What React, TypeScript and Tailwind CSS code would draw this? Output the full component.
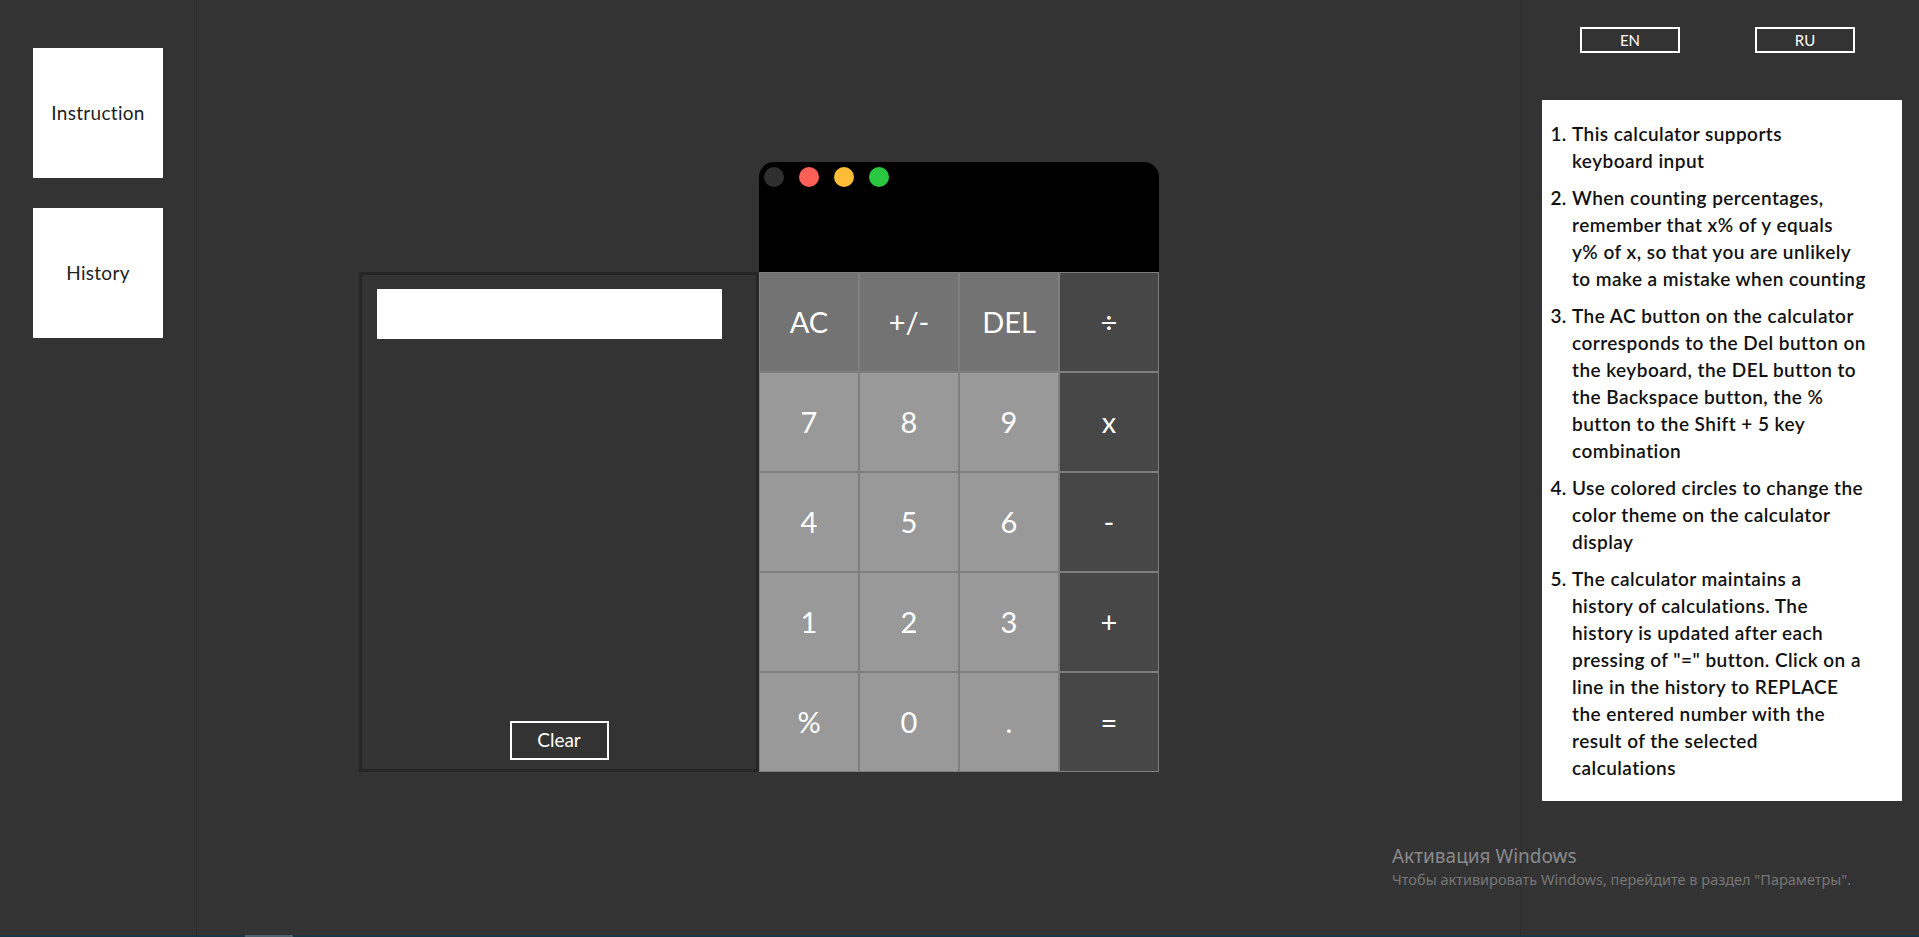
import React, { useState } from 'react';

const KEYS: { label: string; kind: 'fn' | 'num' | 'op' }[] = [
  { label: 'AC', kind: 'fn' },
  { label: '+/-', kind: 'fn' },
  { label: 'DEL', kind: 'fn' },
  { label: '÷', kind: 'op' },
  { label: '7', kind: 'num' },
  { label: '8', kind: 'num' },
  { label: '9', kind: 'num' },
  { label: 'x', kind: 'op' },
  { label: '4', kind: 'num' },
  { label: '5', kind: 'num' },
  { label: '6', kind: 'num' },
  { label: '-', kind: 'op' },
  { label: '1', kind: 'num' },
  { label: '2', kind: 'num' },
  { label: '3', kind: 'num' },
  { label: '+', kind: 'op' },
  { label: '%', kind: 'num' },
  { label: '0', kind: 'num' },
  { label: '.', kind: 'num' },
  { label: '=', kind: 'op' },
];

const keyBg = {
  fn: 'bg-[#737373]',
  num: 'bg-[#999999]',
  op: 'bg-[#474747]',
};

// lines kept as in the original wrap
const TIPS: string[][] = [
  ['This calculator supports', 'keyboard input'],
  [
    'When counting percentages,',
    'remember that x% of y equals',
    'y% of x, so that you are unlikely',
    'to make a mistake when counting',
  ],
  [
    'The AC button on the calculator',
    'corresponds to the Del button on',
    'the keyboard, the DEL button to',
    'the Backspace button, the %',
    'button to the Shift + 5 key',
    'combination',
  ],
  ['Use colored circles to change the', 'color theme on the calculator', 'display'],
  [
    'The calculator maintains a',
    'history of calculations. The',
    'history is updated after each',
    'pressing of "=" button. Click on a',
    'line in the history to REPLACE',
    'the entered number with the',
    'result of the selected',
    'calculations',
  ],
];

const THEMES = ['bg-[#2f2f2f]', 'bg-[#fe5f57]', 'bg-[#fcbc37]', 'bg-[#2ac840]'];

const App: React.FC = () => {
  const [display, setDisplay] = useState('');

  const press = (k: string) => {
    if (k === 'AC') setDisplay('');
    else if (k === 'DEL') setDisplay(d => d.slice(0, -1));
    else setDisplay(d => d + k);
  };

  return (
    <div className="relative w-full h-[937px] flex flex-col bg-[#333333] overflow-hidden font-['Lato','Noto_Sans',sans-serif]">
      <div className="flex h-[935px]">
        {/* left menu */}
        <aside className="w-[197px] shrink-0 border-r border-[#2d2d2d] flex flex-col gap-[30px] pl-[33px] pt-[48px]">
          <button className="w-[130px] h-[130px] bg-white text-[#1d1d1d] text-[19px] tracking-[0.3px]">Instruction</button>
          <button className="w-[130px] h-[130px] bg-white text-[#1d1d1d] text-[19px] tracking-[0.3px]">History</button>
        </aside>

        {/* calculator area */}
        <main className="flex-1 pl-[162px] pt-[162px]">
          <div className="flex items-end">
            <div className="w-[400px] h-[500px] border-[3px] border-[#262626] flex flex-col items-center justify-between pt-[14px] pb-[9px]">
              <input
                className="self-start ml-[15px] w-[345px] h-[50px] bg-white outline-none px-2 text-black"
                readOnly
                value=""
              />
              <button className="w-[99px] h-[39px] border-2 border-white text-white text-[19px]">Clear</button>
            </div>
            <div className="w-[400px]">
              <div className="h-[110px] bg-black rounded-t-[15px] pt-[5px] pl-[5px] flex flex-col">
                <div className="flex gap-[15px]">
                  {THEMES.map(c => (
                    <span key={c} className={`w-[20px] h-[20px] rounded-full ${c}`} />
                  ))}
                </div>
                <div className="flex-1 flex items-end justify-end pr-3 pb-2 text-white text-[40px]">{display}</div>
              </div>
              <div className="grid grid-cols-4">
                {KEYS.map(k => (
                  <button
                    key={k.label}
                    onClick={() => press(k.label)}
                    className={`h-[100px] border border-[#7f7f7f] text-white text-[29px] ${keyBg[k.kind]}`}
                  >
                    {k.label}
                  </button>
                ))}
              </div>
            </div>
          </div>
        </main>

        {/* right panel */}
        <aside className="w-[399px] shrink-0 border-l border-[#2d2d2d] pl-[21px]">
          <div className="flex gap-[75px] pl-[38px] pt-[27px]">
            <button className="w-[100px] h-[26px] border-2 border-white text-white text-[15px] leading-none">EN</button>
            <button className="w-[100px] h-[26px] border-2 border-white text-white text-[15px] leading-none">RU</button>
          </div>
          <div className="mt-[47px] w-[360px] h-[701px] bg-white py-[20px] pr-[10px]">
            <ol className="list-decimal pl-[30px] flex flex-col gap-[10px] text-[19px] leading-[27px] font-semibold tracking-[0.45px] text-[#111111] whitespace-nowrap">
              {TIPS.map((lines, i) => (
                <li key={i}>
                  {lines.map((l, j) => (
                    <React.Fragment key={j}>
                      {j > 0 && <br />}
                      {l}
                    </React.Fragment>
                  ))}
                </li>
              ))}
            </ol>
          </div>
        </aside>
      </div>

      {/* taskbar edge */}
      <div className="h-[2px] bg-[#1b3342] flex">
        <div className="ml-[245px] w-[48px] bg-[#4f626d]" />
      </div>

      {/* activation watermark */}
      <div className="absolute left-[1392px] top-[843px] pointer-events-none font-['Noto_Sans','Open_Sans',sans-serif] text-[#8a8a8a]">
        <div className="text-[19px] leading-[26px]">Активация Windows</div>
        <div className="text-[14.5px] leading-[20px] text-[#767676]">Чтобы активировать Windows, перейдите в раздел "Параметры".</div>
      </div>
    </div>
  );
};

export default App;
